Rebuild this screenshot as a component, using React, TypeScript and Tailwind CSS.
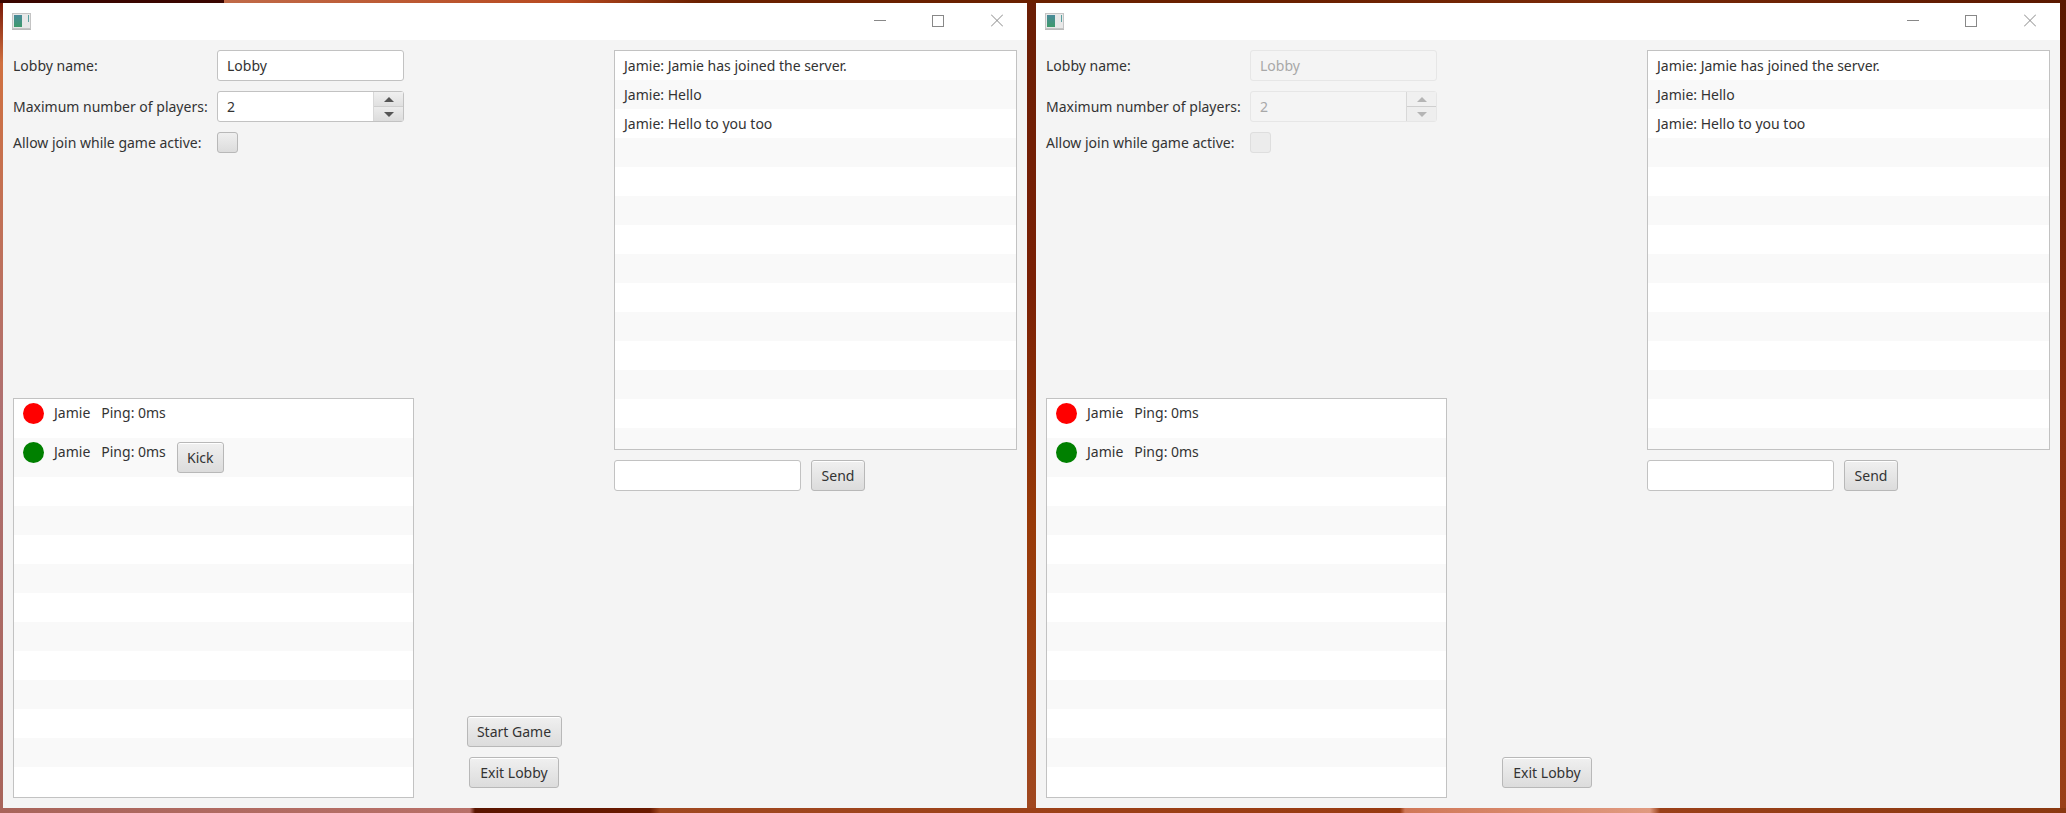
const FONT = "font-['Noto_Sans','Open_Sans',sans-serif]";

const BUTTON =
  "h-[31px] rounded-[3px] border border-[#b8b8b8] bg-gradient-to-b from-[#f0f0f0] to-[#dcdcdc] text-[14px] text-[#333] shadow-[inset_0_1px_0_#fff] flex items-center justify-center";

const chatLines = ["Jamie: Jamie has joined the server.", "Jamie: Hello", "Jamie: Hello to you too"];

const AppIcon = () => (
  <div className="w-[19px] h-[16px] border border-[#c4c4c4] bg-[#e8e8e8] flex gap-[2px] p-[1px] shadow-[0_1px_0_#bbb]">
    <div className="w-[8px] h-full bg-gradient-to-b from-[#4a8a9a] to-[#3f9a6a]" />
    <div className="w-[1px] ml-[4px] h-[7px] bg-[#5aa0a0]" />
  </div>
);

const TitleBar = () => (
  <div className="h-[37px] bg-white flex items-center shrink-0">
    <div className="ml-[9px] mb-[2px]">
      <AppIcon />
    </div>
    <div className="ml-auto flex items-center mb-[2px]">
      <div className="w-[12px] h-px bg-[#888]" />
      <div className="ml-[46px] w-[12px] h-[12px] border border-[#888]" />
      <svg className="ml-[47px] mr-[24px]" width="12" height="13" viewBox="0 0 12 13" fill="none" stroke="#888">
        <path d="M0 0.5L12 12.5M12 0.5L0 12.5" />
      </svg>
    </div>
  </div>
);

const Arrow = ({ up, disabled }: { up?: boolean; disabled?: boolean }) => (
  <div
    className={
      "h-0 w-0 border-x-[5px] border-x-transparent " +
      (up
        ? disabled
          ? "border-b-[5px] border-b-[#b5b5b5]"
          : "border-b-[5px] border-b-[#555]"
        : disabled
          ? "border-t-[5px] border-t-[#b5b5b5]"
          : "border-t-[5px] border-t-[#555]")
    }
  />
);

const Stripes = ({ count, start }: { count: number; start: number }) => (
  <>
    {Array.from({ length: count }).map((_, i) => (
      <div key={i} className={"h-[29px] shrink-0 " + ((i + start) % 2 === 0 ? "bg-white" : "bg-[#f9f9f9]")} />
    ))}
  </>
);

const Player = ({ color, odd, kick }: { color: string; odd?: boolean; kick?: boolean }) => (
  <div className={"h-[39px] shrink-0 flex items-start pl-[9px] pt-[4px] " + (odd ? "bg-[#f9f9f9]" : "bg-white")}>
    <div className={"w-[21px] h-[21px] rounded-full " + color} />
    <span className="ml-[10px] leading-[20px]">Jamie</span>
    <span className="ml-[11px] leading-[20px]">Ping: 0ms</span>
    {kick && <div className={BUTTON + " ml-[11px] w-[47px]"}>Kick</div>}
  </div>
);

const LobbyWindow = ({ host }: { host?: boolean }) => {
  const field = host ? "bg-white border-[#c2c2c2] text-[#333]" : "bg-[#f4f4f4] border-[#e6e6e6] text-[#a8a8a8]";

  return (
    <div className="w-[1024px] h-[805px] bg-[#f4f4f4] flex flex-col">
      <TitleBar />
      <div className="flex-1 flex pl-[10px] pt-[10px] text-[14px] text-[#333]">
        <div className="w-[401px] flex flex-col">
          <div className="flex items-center h-[31px]">
            <span className="w-[204px]">Lobby name:</span>
            <div className={"w-[187px] h-[31px] rounded-[3px] border pl-[9px] flex items-center " + field}>Lobby</div>
          </div>
          <div className="flex items-center h-[31px] mt-[10px]">
            <span className="w-[204px] whitespace-nowrap">Maximum number of players:</span>
            <div className={"w-[187px] h-[31px] rounded-[3px] border flex " + field}>
              <div className="flex-1 pl-[9px] flex items-center">2</div>
              <div className="w-[30px] flex flex-col border-l border-[#d8d8d8]">
                <div
                  className={
                    "flex-1 flex items-center justify-center border-b border-[#cfcfcf] " +
                    (host ? "bg-gradient-to-b from-[#f0f0f0] to-[#e0e0e0]" : "bg-[#f0f0f0]")
                  }
                >
                  <Arrow up disabled={!host} />
                </div>
                <div
                  className={
                    "flex-1 flex items-center justify-center " +
                    (host ? "bg-gradient-to-b from-[#ececec] to-[#dcdcdc]" : "bg-[#eeeeee]")
                  }
                >
                  <Arrow disabled={!host} />
                </div>
              </div>
            </div>
          </div>
          <div className="flex items-center h-[21px] mt-[10px]">
            <span className="w-[204px] whitespace-nowrap">Allow join while game active:</span>
            <div
              className={
                "w-[21px] h-[21px] rounded-[3px] border " +
                (host
                  ? "border-[#b8b8b8] bg-gradient-to-b from-[#efefef] to-[#dcdcdc]"
                  : "border-[#dedede] bg-[#ececec]")
              }
            />
          </div>
          <div className="mt-[245px] h-[400px] border border-[#c2c2c2] bg-white flex flex-col overflow-hidden">
            <Player color="bg-[#ff0000]" />
            <Player color="bg-[#008000]" odd kick={host} />
            <Stripes count={11} start={0} />
          </div>
        </div>

        <div className="w-[200px] flex flex-col items-center justify-end pb-[20px]">
          {host && <div className={BUTTON + " w-[95px] mb-[10px]"}>Start Game</div>}
          <div className={BUTTON + " w-[90px]"}>Exit Lobby</div>
        </div>

        <div className="w-[403px] flex flex-col">
          <div className="h-[400px] border border-[#c2c2c2] bg-white flex flex-col overflow-hidden">
            {chatLines.map((line, i) => (
              <div
                key={line}
                className={"h-[29px] shrink-0 pl-[9px] flex items-center " + (i % 2 === 0 ? "bg-white" : "bg-[#f9f9f9]")}
              >
                {line}
              </div>
            ))}
            <Stripes count={11} start={1} />
          </div>
          <div className="flex mt-[10px] gap-[10px]">
            <div className="w-[187px] h-[31px] rounded-[3px] border border-[#c2c2c2] bg-white" />
            <div className={BUTTON + " w-[54px]"}>Send</div>
          </div>
        </div>
      </div>
    </div>
  );
};

export default function App() {
  return (
    <div className={"w-[2066px] h-[813px] overflow-hidden flex flex-col " + FONT}>
      {/* wallpaper showing around the two windows */}
      <div className="h-[3px] shrink-0 bg-[linear-gradient(90deg,#3a0500_0,#3a0500_224px,#c06a48_224px,#b84a20_566px,#6a2000_700px,#6a2000_1300px,#7a2a08_1600px,#5a1800_2066px)]" />
      <div className="h-[805px] flex shrink-0">
        <div className="w-[3px] bg-[linear-gradient(180deg,#7a1a08_0,#d07040_60px,#b07070_400px,#a8645a_100%)]" />
        <LobbyWindow host />
        <div className="w-[9px] bg-[linear-gradient(180deg,#6a1e05_0,#7a2005_35%,#983a08_65%,#a04820_100%)]" />
        <LobbyWindow />
        <div className="w-[6px] bg-[linear-gradient(180deg,#5a1800_0,#8a3010_50%,#9a4018_100%)]" />
      </div>
      <div className="flex-1 bg-[linear-gradient(90deg,#a8645a_0,#b87068_470px,#5a1500_475px,#6a1a00_650px,#a04820_660px,#983a10_1400px,#d07858_1405px,#e09a80_1650px,#9a4018_1660px,#8a3810_2066px)]" />
    </div>
  );
}
